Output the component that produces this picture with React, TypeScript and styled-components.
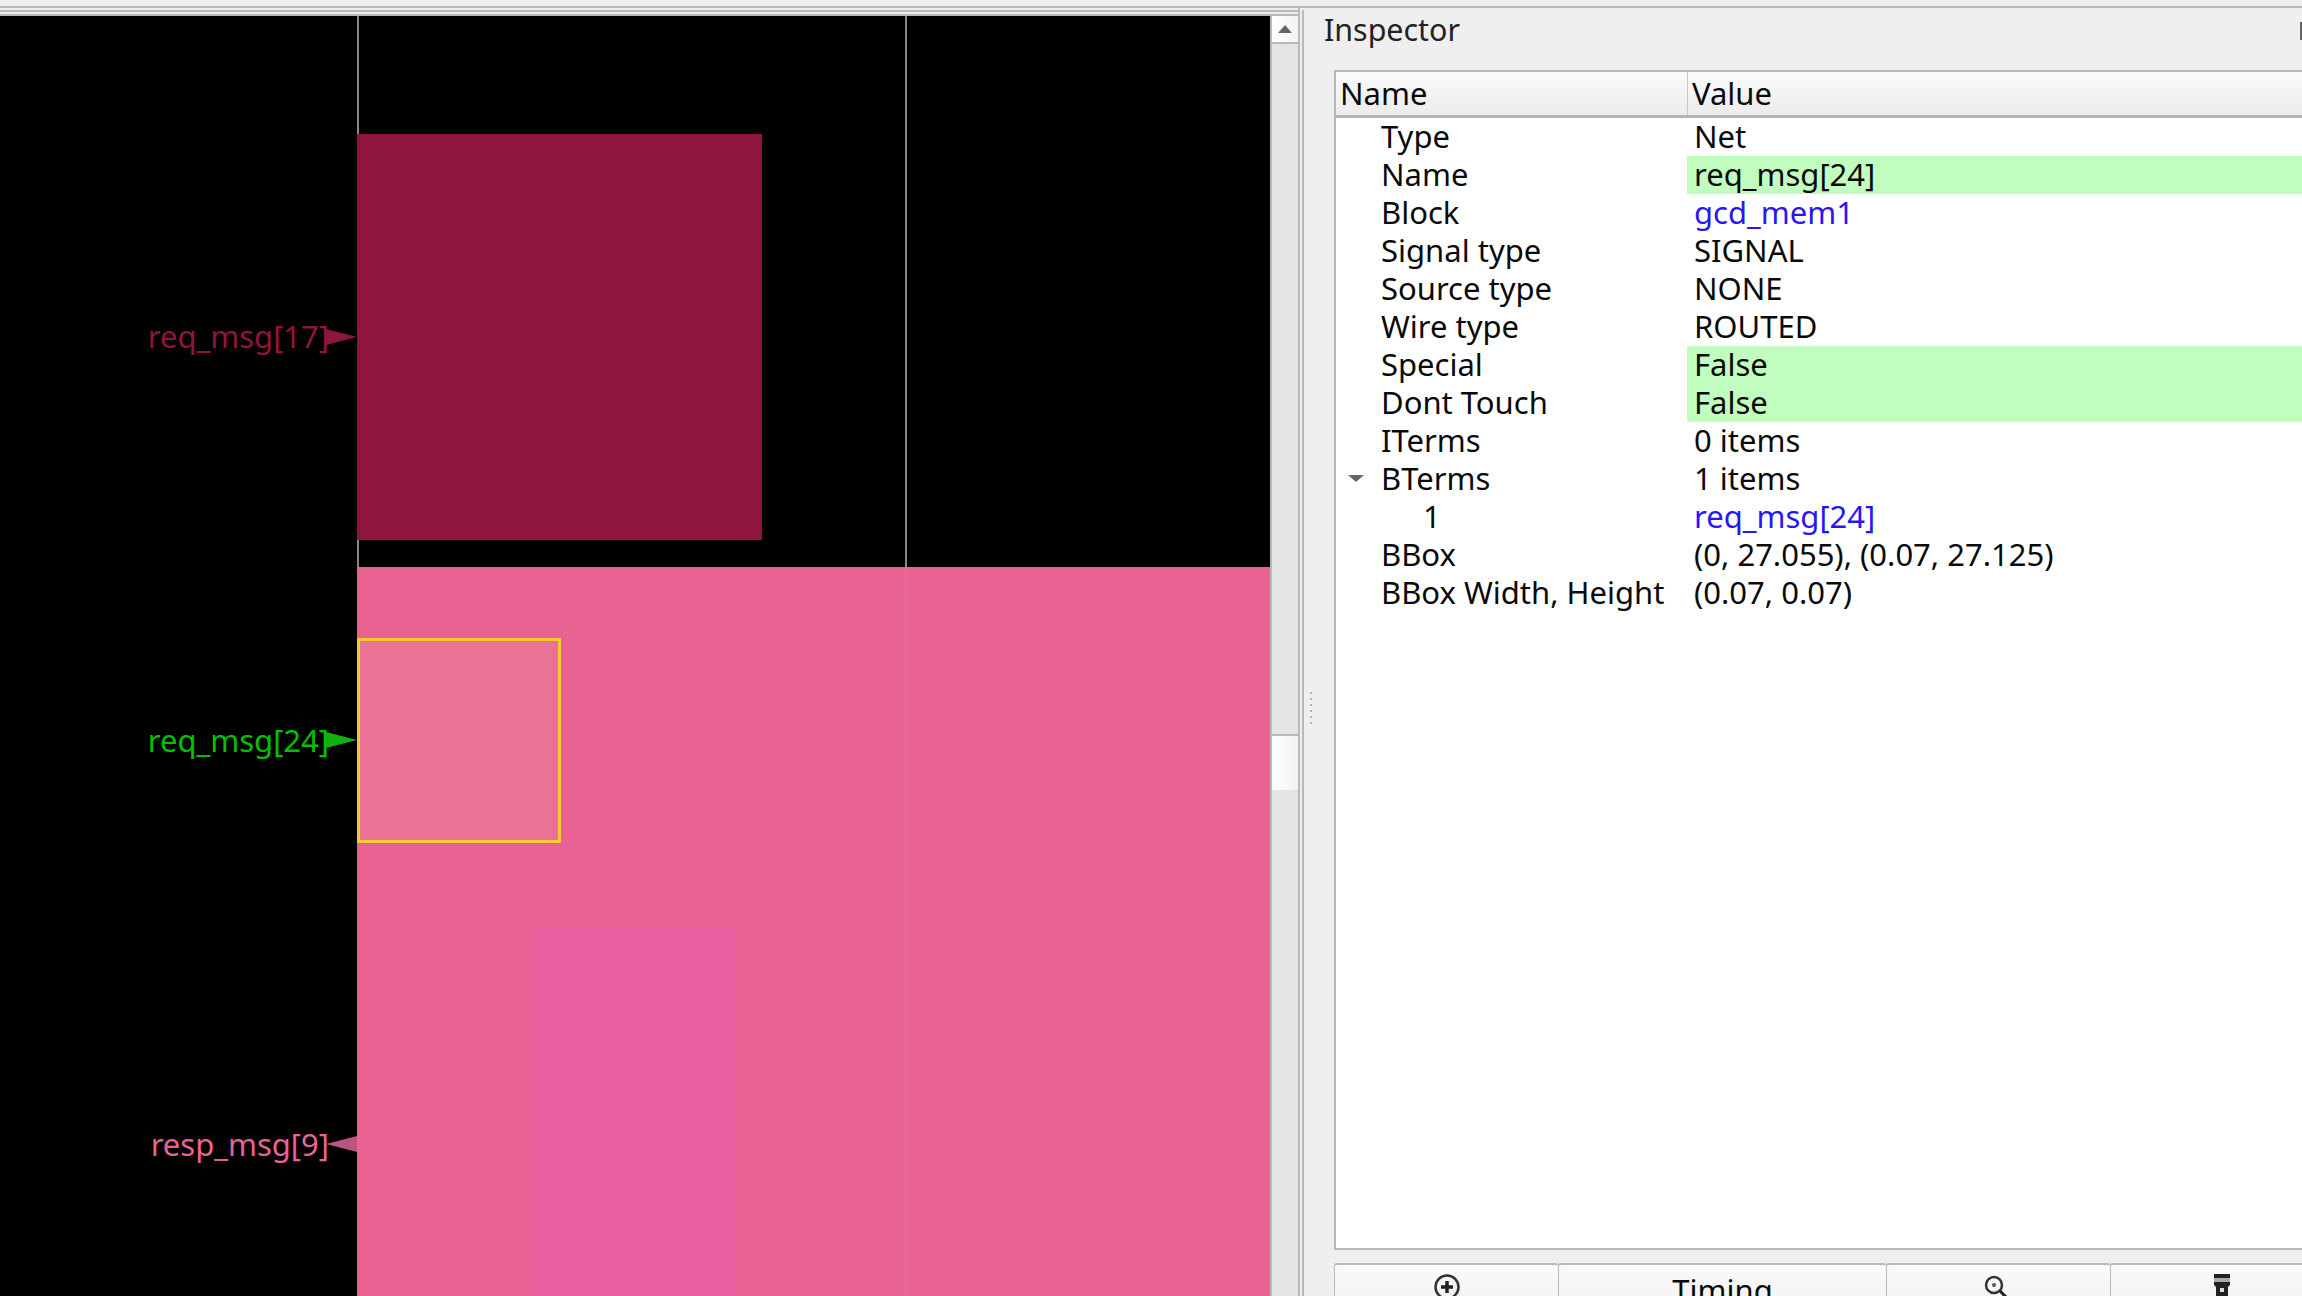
import styled, { createGlobalStyle } from 'styled-components';

const GlobalStyle = createGlobalStyle`
  html, body {
    margin: 0;
    padding: 0;
    width: 2302px;
    height: 1296px;
    overflow: hidden;
    background: #efefef;
  }
`;

const Window = styled.div`
  width: 2302px;
  height: 1296px;
  overflow: hidden;
  display: flex;
  flex-direction: column;
  background: #efefef;
  font-family: "Noto Sans", sans-serif;
  color: #0a0a0a;
`;

const MenuEdge = styled.div`
  flex: none;
  height: 6px;
  border-bottom: 2px solid #b9b9b9;
`;

const Body = styled.div`
  flex: 1;
  min-height: 0;
  display: flex;
`;

const ViewerDock = styled.div`
  flex: none;
  width: 1300px;
  padding-top: 2px;
  box-sizing: border-box;
  border-right: 2px solid #b9b9b9;
`;

const ViewerFrame = styled.div`
  height: 100%;
  box-sizing: border-box;
  border-top: 2px solid #b9b9b9;
  padding-top: 2px;
`;

const ViewerInner = styled.div`
  height: 100%;
  box-sizing: border-box;
  display: flex;
  border-top: 2px solid #b9b9b9;
`;

const Canvas = styled.div`
  position: relative;
  flex: none;
  width: 1270px;
  background: #000;
  overflow: hidden;
`;

const Shape = styled.div<{ $x: number; $y: number; $w: number; $h: number; $fill: string }>`
  position: absolute;
  left: ${p => p.$x}px;
  top: ${p => p.$y}px;
  width: ${p => p.$w}px;
  height: ${p => p.$h}px;
  background: ${p => p.$fill};
`;

const Selection = styled(Shape)`
  box-sizing: border-box;
  border: 3px solid #f7c935;
`;

const PinLabel = styled.div<{ $y: number; $color: string }>`
  position: absolute;
  right: 941px;
  top: ${p => p.$y}px;
  font-family: "Noto Sans", sans-serif;
  font-size: 31px;
  line-height: 40px;
  white-space: nowrap;
  color: ${p => p.$color};
`;

const PinArrow = styled.svg<{ $y: number }>`
  position: absolute;
  left: 326px;
  top: ${p => p.$y}px;
`;

const ScrollBar = styled.div`
  flex: none;
  width: 28px;
  box-sizing: border-box;
  display: flex;
  flex-direction: column;
  border-left: 2px solid #b9b9b9;
  background: #e4e4e4;
`;

const ScrollButton = styled.div`
  flex: none;
  height: 26px;
  display: flex;
  align-items: center;
  justify-content: center;
  background: linear-gradient(90deg, #fff, #f2f2f2);
  border-bottom: 2px solid #b9b9b9;
`;

const ScrollTrack = styled.div<{ $size: number }>`
  flex: none;
  height: ${p => p.$size}px;
  background: #e4e4e4;
`;

const ScrollHandle = styled.div`
  flex: none;
  height: 54px;
  border-top: 2px solid #b9b9b9;
  background: linear-gradient(90deg, #fff, #f2f2f2);
`;

const Splitter = styled.div`
  flex: none;
  width: 2px;
`;

const InspectorDock = styled.div`
  flex: 1;
  min-width: 0;
  display: flex;
  flex-direction: column;
  position: relative;
  margin-top: 2px;
  border-left: 2px solid #b9b9b9;
  padding-left: 30px;
`;

const GripDots = styled.div`
  position: absolute;
  left: 6px;
  top: 682px;
  display: flex;
  flex-direction: column;
  gap: 4px;
`;

const GripDot = styled.span`
  width: 2px;
  height: 2px;
  background: #b3b3b3;
`;

const DockTitle = styled.div`
  flex: none;
  height: 60px;
  margin-left: -10px;
  font-size: 30.4px;
  line-height: 40px;
  color: #222;
`;

const FloatTab = styled.div`
  position: absolute;
  right: 0;
  top: 12px;
  width: 2px;
  height: 18px;
  background: #666;
`;

const TreeFrame = styled.div`
  flex: none;
  width: 1100px;
  height: 1180px;
  box-sizing: border-box;
  border: 2px solid #b9b9b9;
  background: #fff;
`;

const HeaderRow = styled.div`
  height: 46px;
  box-sizing: border-box;
  display: grid;
  grid-template-columns: 351px 1fr;
  border-bottom: 3px solid #b4b4b4;
  background: linear-gradient(#fafafa, #ececec);
  font-size: 31px;
  line-height: 42px;
`;

const HeaderCell = styled.div`
  padding-left: 4px;
  & + & {
    border-left: 1px solid #c8c8c8;
  }
`;

const Row = styled.div`
  height: 38px;
  display: grid;
  grid-template-columns: 351px 1fr;
  font-size: 31px;
  line-height: 36px;
  white-space: nowrap;
`;

const NameCell = styled.div<{ $indent?: boolean }>`
  position: relative;
  padding-left: ${p => (p.$indent ? 87 : 45)}px;
`;

const ValueCell = styled.div<{ $changed?: boolean; $link?: boolean }>`
  padding-left: 7px;
  background: ${p => (p.$changed ? '#c1fdbe' : 'transparent')};
  color: ${p => (p.$link ? '#2a16f5' : 'inherit')};
`;

const Expander = styled.span`
  position: absolute;
  left: 12px;
  top: 15px;
  width: 0;
  height: 0;
  border-left: 8px solid transparent;
  border-right: 8px solid transparent;
  border-top: 7px solid #666;
`;

const ButtonBar = styled.div`
  flex: none;
  margin-top: 13px;
  display: flex;
`;

const ToolButton = styled.div<{ $w: number }>`
  flex: none;
  width: ${p => p.$w}px;
  height: 60px;
  box-sizing: border-box;
  border: 1px solid #b9b9b9;
  border-top-width: 2px;
  border-right-width: 0;
  border-radius: 3px 3px 0 0;
  background: linear-gradient(#fafafa, #f0f0f0);
  display: flex;
  justify-content: center;
  padding-top: 5px;
  font-size: 31px;
  line-height: 40px;
`;

const ButtonIcon = styled.svg<{ $dx?: number; $dy?: number }>`
  margin-left: ${p => p.$dx ?? 0}px;
  margin-top: ${p => p.$dy ?? 0}px;
`;

const rows = [
  { name: 'Type', value: 'Net' },
  { name: 'Name', value: 'req_msg[24]', changed: true },
  { name: 'Block', value: 'gcd_mem1', link: true },
  { name: 'Signal type', value: 'SIGNAL' },
  { name: 'Source type', value: 'NONE' },
  { name: 'Wire type', value: 'ROUTED' },
  { name: 'Special', value: 'False', changed: true },
  { name: 'Dont Touch', value: 'False', changed: true },
  { name: 'ITerms', value: '0 items' },
  { name: 'BTerms', value: '1 items', open: true },
  { name: '1', value: 'req_msg[24]', link: true, indent: true },
  { name: 'BBox', value: '(0, 27.055), (0.07, 27.125)' },
  { name: 'BBox Width, Height', value: '(0.07, 0.07)' },
];

const ZoomInCircle = () => (
  <ButtonIcon $dy={3} width="28" height="28" viewBox="0 0 28 28">
    <circle cx="14" cy="14" r="11.5" fill="none" stroke="#333" strokeWidth="2.5" />
    <path d="M14 8v12M8 14h12" stroke="#222" strokeWidth="3.5" />
  </ButtonIcon>
);

const Magnifier = () => (
  <ButtonIcon $dx={-6} $dy={4} width="28" height="28" viewBox="0 0 28 28">
    <circle cx="12" cy="11" r="8" fill="none" stroke="#333" strokeWidth="2.5" />
    <circle cx="12" cy="11" r="2" fill="#555" />
    <path d="M18 17l7 7" stroke="#222" strokeWidth="3" />
  </ButtonIcon>
);

const Flashlight = () => (
  <ButtonIcon $dx={-2} $dy={4} width="16" height="24" viewBox="0 0 16 24">
    <path d="M0 0h16v4H0z" fill="#222" />
    <path d="M0 4h16v4H0z" fill="#aaa" />
    <path d="M0 8h16v3l-2 2H2L0 11z" fill="#222" />
    <path d="M2 13h12v11H2z" fill="#222" />
    <path d="M6 14h4v4H6z" fill="#ddd" />
  </ButtonIcon>
);

const Arrow = ({ y, fill, left }: { y: number; fill: string; left?: boolean }) => (
  <PinArrow $y={y} width="32" height="20" viewBox="0 0 32 20">
    <path d={left ? 'M0 10L31 2V18z' : 'M0 2L31 10L0 18z'} fill={fill} />
  </PinArrow>
);

const App = () => (
  <Window>
    <GlobalStyle />
    <MenuEdge />
    <Body>
      <ViewerDock>
        <ViewerFrame>
          <ViewerInner>
            <Canvas>
              <Shape $x={357} $y={0} $w={2} $h={551} $fill="#888" />
              <Shape $x={905} $y={0} $w={2} $h={551} $fill="#888" />
              <Shape $x={357} $y={118} $w={405} $h={406} $fill="#90153e" />
              <Shape $x={357} $y={551} $w={913} $h={729} $fill="#e86393" />
              <Shape $x={905} $y={551} $w={2} $h={729} $fill="#e96a98" />
              <Shape $x={531} $y={910} $w={203} $h={370} $fill="#e860a0" />
              <Selection $x={357} $y={622} $w={204} $h={205} $fill="#e97295" />
              <PinLabel $y={300} $color="#90153e">req_msg[17]</PinLabel>
              <Arrow y={311} fill="#90153e" />
              <PinLabel $y={704} $color="#00c000">req_msg[24]</PinLabel>
              <Arrow y={714} fill="#10b010" />
              <PinLabel $y={1108} $color="#e86393">resp_msg[9]</PinLabel>
              <Arrow y={1118} fill="#b85580" left />
            </Canvas>
            <ScrollBar>
              <ScrollButton>
                <svg width="14" height="8" viewBox="0 0 14 8">
                  <path d="M7 0L14 8H0z" fill="#666" />
                </svg>
              </ScrollButton>
              <ScrollTrack $size={690} />
              <ScrollHandle />
            </ScrollBar>
          </ViewerInner>
        </ViewerFrame>
      </ViewerDock>
      <Splitter />
      <InspectorDock>
        <GripDots>
          {[0, 1, 2, 3, 4, 5].map(i => (
            <GripDot key={i} />
          ))}
        </GripDots>
        <FloatTab />
        <DockTitle>Inspector</DockTitle>
        <TreeFrame>
          <HeaderRow>
            <HeaderCell>Name</HeaderCell>
            <HeaderCell>Value</HeaderCell>
          </HeaderRow>
          {rows.map(r => (
            <Row key={r.name}>
              <NameCell $indent={r.indent}>
                {r.open && <Expander />}
                {r.name}
              </NameCell>
              <ValueCell $changed={r.changed} $link={r.link}>
                {r.value}
              </ValueCell>
            </Row>
          ))}
        </TreeFrame>
        <ButtonBar>
          <ToolButton $w={224}>
            <ZoomInCircle />
          </ToolButton>
          <ToolButton $w={328}>Timing</ToolButton>
          <ToolButton $w={224}>
            <Magnifier />
          </ToolButton>
          <ToolButton $w={224}>
            <Flashlight />
          </ToolButton>
        </ButtonBar>
      </InspectorDock>
    </Body>
  </Window>
);

export default App;
